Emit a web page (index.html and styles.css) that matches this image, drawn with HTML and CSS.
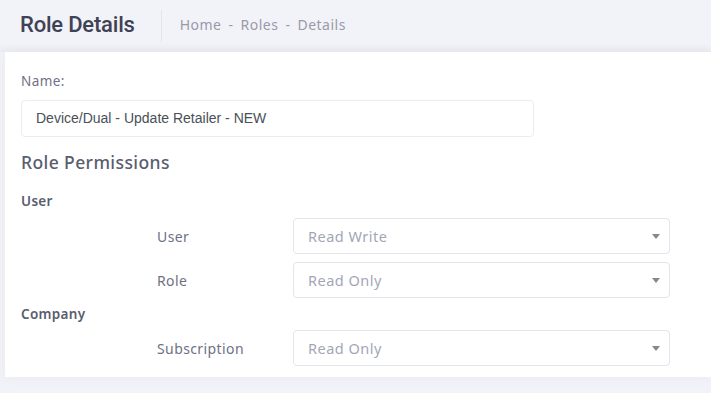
FILE: index.html
```html
<!DOCTYPE html>
<html>
<head>
<meta charset="utf-8">
<link rel="stylesheet" href="styles.css">
</head>
<body>
<header class="subheader">
  <h1 class="title">Role Details</h1>
  <div class="sep"></div>
  <nav class="crumbs"><span>Home</span><span class="dash">-</span><span>Roles</span><span class="dash">-</span><span>Details</span></nav>
</header>
<main class="card">
  <label class="name-label">Name:</label>
  <div class="name-input">Device/Dual - Update Retailer - NEW</div>
  <h2 class="perm-title">Role Permissions</h2>
  <div class="group">User</div>
  <div class="row"><span class="row-label">User</span><div class="select">Read Write<span class="caret"></span></div></div>
  <div class="row"><span class="row-label">Role</span><div class="select">Read Only<span class="caret"></span></div></div>
  <div class="group">Company</div>
  <div class="row"><span class="row-label">Subscription</span><div class="select">Read Only<span class="caret"></span></div></div>
</main>
</body>
</html>
```
FILE: styles.css
```css
html, body { margin: 0; padding: 0; }
body {
  background: #f2f3f8;
  font-family: "Noto Sans", "Open Sans", sans-serif;
  width: 711px;
  height: 393px;
  overflow: hidden;
}
.subheader {
  height: 52px;
  display: flex;
  align-items: center;
  padding: 0 0 4px 20px;
  box-sizing: border-box;
  background: linear-gradient(#f2f3f8 85%, #ebecf2);
}
.title {
  margin: 0;
  font-family: Roboto, sans-serif;
  font-weight: 500;
  font-size: 22px;
  color: #3f4254;
  letter-spacing: -0.2px;
}
.sep {
  width: 1px;
  height: 32px;
  background: #e2e4ec;
  margin: 4px 18px 0 26px;
}
.crumbs {
  font-size: 14px;
  color: #989aaa;
  display: flex;
  gap: 7px;
  letter-spacing: 0.5px;
}
.card {
  display: block;
  background: #fff;
  margin-left: 5px;
  height: 325px;
  padding: 20px 0 0 16px;
  box-sizing: border-box;
  box-shadow: 0 0 12px rgba(82, 63, 105, 0.06);
}
.name-label {
  display: block;
  font-size: 13.5px;
  color: #6e7185;
  height: 18px;
  line-height: 18px;
  letter-spacing: 0.4px;
}
.name-input {
  margin-top: 10px;
  width: 513px;
  height: 37px;
  box-sizing: border-box;
  border: 1px solid #ebedf2;
  border-radius: 4px;
  padding-left: 14px;
  font-family: "Liberation Sans", Arial, sans-serif;
  font-size: 14px;
  line-height: 35px;
  color: #495057;
}
.perm-title {
  margin: 13px 0 0;
  font-size: 17.5px;
  font-weight: 500;
  color: #595d6e;
  height: 24px;
  line-height: 24px;
  letter-spacing: 0.4px;
}
.group {
  margin-top: 18px;
  font-size: 13.5px;
  font-weight: 600;
  color: #595d6e;
  line-height: 18px;
  height: 18px;
  letter-spacing: 0.3px;
}
.row {
  display: flex;
  align-items: center;
  margin-top: 8px;
}
.group + .row { margin-top: 8px; }
.row + .group { margin-top: 7px; }
.row + .group + .row { margin-top: 7px; }
.row-label {
  width: 136px;
  padding-left: 136px;
  font-size: 14px;
  color: #6e7185;
  letter-spacing: 0.4px;
}
.select {
  position: relative;
  width: 377px;
  height: 36px;
  box-sizing: border-box;
  border: 1px solid #e2e5ec;
  border-radius: 4px;
  padding-left: 14px;
  font-size: 14.5px;
  line-height: 34px;
  color: #a3a6b7;
  letter-spacing: 0.5px;
}
.caret {
  position: absolute;
  right: 9px;
  top: 15px;
  width: 0;
  height: 0;
  border-left: 4px solid transparent;
  border-right: 4px solid transparent;
  border-top: 5px solid #888;
}
```
